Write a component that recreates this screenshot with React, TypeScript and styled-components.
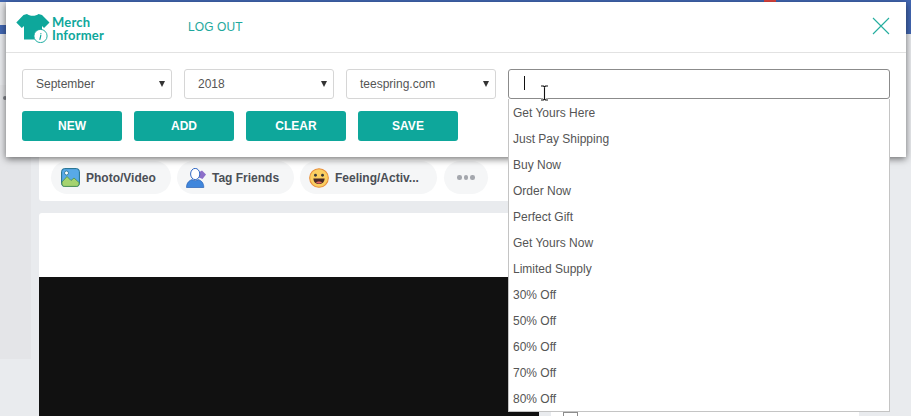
import { createGlobalStyle, styled } from 'styled-components';

const TEAL = '#0ea79b';

const SUGGESTIONS = [
  'Get Yours Here',
  'Just Pay Shipping',
  'Buy Now',
  'Order Now',
  'Perfect Gift',
  'Get Yours Now',
  'Limited Supply',
  '30% Off',
  '50% Off',
  '60% Off',
  '70% Off',
  '80% Off',
];

const SELECTS = ['September', '2018', 'teespring.com'];
const ACTIONS = ['NEW', 'ADD', 'CLEAR', 'SAVE'];

const GlobalStyle = createGlobalStyle`
  html, body {
    margin: 0;
    padding: 0;
    height: 416px;
    overflow: hidden;
    background: #e9ebee;
    font-family: 'Liberation Sans', Arial, sans-serif;
  }
  * {
    box-sizing: border-box;
  }
`;

const PhotoIcon = () => (
  <svg width="20" height="19" viewBox="-1 0 20 19">
    <rect x="0.6" y="0.6" width="17.8" height="17.8" rx="3" fill="#58a9e8" stroke="#1f6f8c" />
    <path d="M1 14 L6 8.5 L10 12.5 L13 10 L18 14.5 V16 a2.4 2.4 0 0 1 -2.4 2.4 H3.4 A2.4 2.4 0 0 1 1 16 Z" fill="#a5d36f" stroke="#4b8f4e" strokeWidth="0.8" />
    <circle cx="5.5" cy="5" r="2" fill="#fff" stroke="#1f6f8c" strokeWidth="0.8" />
  </svg>
);

const TagIcon = () => (
  <svg width="20" height="20" viewBox="0 0 20 20">
    <path d="M12.5 4.5 L16 2.5 L20 6.5 L16.5 11 L13 9.5 Z" fill="#8d6fc9" />
    <ellipse cx="9.2" cy="6" rx="4.6" ry="5.6" fill="#fff" stroke="#2f67c4" strokeWidth="1" />
    <path d="M0.5 19.5 C0.5 14.5 3.5 12.5 6 11.6 C7.6 13 10.8 13 12.4 11.6 C15 12.5 17.8 14.5 17.8 19.5 Z" fill="#3f86dc" stroke="#2a62b5" strokeWidth="0.7" />
  </svg>
);

const SmileIcon = () => (
  <svg width="20" height="20" viewBox="0 0 21 21">
    <circle cx="10.5" cy="10.5" r="9.8" fill="#fbcf61" stroke="#e88f3c" strokeWidth="1.1" />
    <circle cx="6.8" cy="7.6" r="1.5" fill="#3a3a3a" />
    <circle cx="14.2" cy="7.6" r="1.5" fill="#3a3a3a" />
    <path d="M4.6 11 H16.4 C16.2 15 13.6 16.8 10.5 16.8 C7.4 16.8 4.8 15 4.6 11 Z" fill="#4a2a26" />
    <path d="M7.4 15.2 C8.6 13.8 12.4 13.8 13.6 15.2 C12.4 16.6 8.6 16.6 7.4 15.2 Z" fill="#ea6a62" />
  </svg>
);

const ShirtLogo = () => (
  <svg width="36" height="30" viewBox="0 0 36 30">
    <path
      d="M11 1 C13.5 3.4 20 3.4 22.5 1 L26 2 L33.5 9.5 L28 15 L26 13 L26 26.5 H8 L8 13 L5.8 15 L0.3 9.5 L7.5 2 Z"
      fill={TEAL}
    />
    <circle cx="24.5" cy="23" r="6.6" fill="#fff" stroke={TEAL} strokeWidth="0.9" />
    <path d="M24.9 20.7 V20.6 M24.8 22.4 L23.9 26.4" stroke={TEAL} strokeWidth="1.2" strokeLinecap="round" fill="none" />
  </svg>
);

const CloseIcon = () => (
  <svg width="18" height="18" viewBox="0 0 18 18">
    <path d="M1 1 L17 17 M17 1 L1 17" stroke="#25ae9f" strokeWidth="1.1" fill="none" />
  </svg>
);

const IBeam = () => (
  <svg width="9" height="16" viewBox="0 0 9 16">
    <path d="M1 1 H3.5 L4.5 2 L5.5 1 H8 M4.5 2 V14 M1 15 H3.5 L4.5 14 L5.5 15 H8" stroke="#fff" strokeWidth="2.6" fill="none" />
    <path d="M1 1 H3.5 L4.5 2 L5.5 1 H8 M4.5 2 V14 M1 15 H3.5 L4.5 14 L5.5 15 H8" stroke="#111" strokeWidth="1.1" fill="none" />
  </svg>
);

const App = () => (
  <>
    <GlobalStyle />
    <Page>
      <FacebookBar>
        <BarPatch />
        <NotificationBadge />
      </FacebookBar>
      <FeedLayout>
        <LeftRail>
          <RailPanel>
            <RailDot />
          </RailPanel>
        </LeftRail>
        <FeedColumn>
          <ComposerCard>
            <ComposerChip $width={120}>
              <PhotoIcon />
              <span>Photo/Video</span>
            </ComposerChip>
            <ComposerChip $width={117}>
              <TagIcon />
              <span>Tag Friends</span>
            </ComposerChip>
            <ComposerChip $width={137}>
              <SmileIcon />
              <span>Feeling/Activ...</span>
            </ComposerChip>
            <MoreChip>
              <MoreDot />
              <MoreDot />
              <MoreDot />
            </MoreChip>
          </ComposerCard>
          <PostCard>
            <PostVideo />
          </PostCard>
        </FeedColumn>
        <SideColumn>
          <SideCard>
            <SideCheckbox />
          </SideCard>
        </SideColumn>
      </FeedLayout>

      <Modal>
        <ModalHeader>
          <Logo>
            <ShirtLogo />
            <LogoText>
              Merch
              <br />
              Informer
            </LogoText>
          </Logo>
          <LogOut>LOG OUT</LogOut>
          <CloseButton>
            <CloseIcon />
          </CloseButton>
        </ModalHeader>
        <ModalBody>
          <FieldRow>
            {SELECTS.map((label) => (
              <SelectBox key={label}>
                <span>{label}</span>
                <Caret />
              </SelectBox>
            ))}
            <SearchField>
              <TextCaret />
              <CursorSlot>
                <IBeam />
              </CursorSlot>
              <SuggestionList>
                {SUGGESTIONS.map((item) => (
                  <Suggestion key={item}>{item}</Suggestion>
                ))}
              </SuggestionList>
            </SearchField>
          </FieldRow>
          <ActionRow>
            {ACTIONS.map((label) => (
              <ActionButton key={label}>{label}</ActionButton>
            ))}
          </ActionRow>
        </ModalBody>
      </Modal>
    </Page>
  </>
);

const Page = styled.div`
  position: relative;
  width: 911px;
  height: 416px;
  overflow: hidden;
  background: #e9ebee;
`;

const FacebookBar = styled.div`
  position: relative;
  height: 34px;
  background: #4267b2;
`;

const BarPatch = styled.div`
  position: absolute;
  left: 0;
  top: 2px;
  width: 6px;
  height: 23px;
  background: #e4e5e8;
`;

const NotificationBadge = styled.div`
  position: absolute;
  left: 764px;
  top: 0;
  width: 12px;
  height: 3px;
  background: #e0453f;
`;

const FeedLayout = styled.div`
  display: grid;
  grid-template-columns: 31px 500px 312px;
  column-gap: 8px;
  height: 382px;
`;

const LeftRail = styled.div`
  padding-top: 51px;
`;

const RailPanel = styled.div`
  height: 274px;
  padding: 11px 0 0 3px;
  background: #e4e5e8;
`;

const RailDot = styled.div`
  width: 4px;
  height: 4px;
  border-radius: 50%;
  background: #7f8289;
`;

const FeedColumn = styled.div`
  display: flex;
  flex-direction: column;
  gap: 12px;
  padding-top: 80px;
`;

const ComposerCard = styled.div`
  display: flex;
  align-items: flex-start;
  gap: 6px;
  height: 87px;
  padding: 47px 12px 0;
  background: #fff;
  border-radius: 3px;
`;

const ComposerChip = styled.div<{ $width: number }>`
  display: flex;
  align-items: center;
  gap: 6px;
  width: ${({ $width }) => $width}px;
  height: 33px;
  padding-left: 9px;
  border-radius: 17px;
  background: #f5f6f7;
  color: #4b4f56;
  font-size: 12px;
  font-weight: 700;
  white-space: nowrap;
`;

const MoreChip = styled.div`
  display: flex;
  align-items: center;
  justify-content: center;
  gap: 2px;
  width: 44px;
  height: 33px;
  margin-left: 1px;
  border-radius: 17px;
  background: #f5f6f7;
`;

const MoreDot = styled.span`
  width: 4.5px;
  height: 4.5px;
  border-radius: 50%;
  background: #a4a7ad;
`;

const PostCard = styled.div`
  flex: 1;
  display: flex;
  padding-top: 64px;
  background: #fff;
  border-radius: 3px 3px 0 0;
`;

const PostVideo = styled.div`
  flex: 1;
  background: #111;
`;

const SideColumn = styled.div`
  padding: 300px 0 0 4px;
`;

const SideCard = styled.div`
  height: 82px;
  padding: 78px 0 0 12px;
  background: #fff;
`;

const SideCheckbox = styled.div`
  width: 15px;
  height: 4px;
  background: #fff;
  border: 1px solid #8d8d8d;
  border-bottom: none;
`;

const Modal = styled.div`
  position: absolute;
  left: 6px;
  top: 2px;
  width: 900px;
  height: 155px;
  background: #fff;
  box-shadow: 0 2px 7px rgba(0, 0, 0, 0.55);
`;

const ModalHeader = styled.header`
  display: flex;
  align-items: center;
  height: 51px;
  padding: 0 16px 0 10px;
  border-bottom: 1px solid #e2e2e2;
`;

const Logo = styled.div`
  display: flex;
  align-items: flex-start;
  width: 172px;
  height: 34px;
  padding-top: 3px;
`;

const LogoText = styled.div`
  padding-top: 3px;
  color: ${TEAL};
  font-family: Lato, sans-serif;
  font-size: 13px;
  font-weight: 700;
  line-height: 13px;
  letter-spacing: 0.2px;
`;

const LogOut = styled.a`
  flex: 1;
  color: #1ea89d;
  font-size: 12px;
  letter-spacing: 0.1px;
`;

const CloseButton = styled.div`
  display: flex;
  padding-bottom: 2px;
`;

const ModalBody = styled.div`
  display: flex;
  flex-direction: column;
  gap: 12px;
  padding: 16px 16px 0;
`;

const FieldRow = styled.div`
  display: flex;
  gap: 12px;
`;

const SelectBox = styled.div`
  display: flex;
  align-items: center;
  justify-content: space-between;
  width: 150px;
  height: 30px;
  padding: 0 6px 0 13px;
  border: 1px solid #d6d6d6;
  border-radius: 3px;
  background: #fff;
  color: #555;
  font-size: 12px;
`;

const Caret = styled.span`
  width: 0;
  height: 0;
  border-left: 3.5px solid transparent;
  border-right: 3.5px solid transparent;
  border-top: 6px solid #333;
`;

const SearchField = styled.div`
  position: relative;
  display: flex;
  align-items: center;
  width: 382px;
  height: 30px;
  padding-left: 15px;
  border: 1px solid #8b8b8b;
  border-radius: 3px;
  background: #fff;
`;

const TextCaret = styled.span`
  width: 1px;
  height: 14px;
  margin-bottom: 2px;
  background: #111;
`;

const CursorSlot = styled.span`
  position: absolute;
  left: 31px;
  top: 15px;
  z-index: 2;
  display: flex;
`;

const SuggestionList = styled.ul`
  position: absolute;
  left: -1px;
  top: 29px;
  width: 382px;
  margin: 0;
  padding: 0;
  list-style: none;
  background: #fff;
  border: 1px solid #c4c4c4;
  border-top: none;
`;

const Suggestion = styled.li`
  height: 26px;
  padding: 1px 0 0 4px;
  color: #555;
  font-size: 12px;
  line-height: 26px;
`;

const ActionRow = styled.div`
  display: flex;
  gap: 12px;
`;

const ActionButton = styled.button`
  width: 100px;
  height: 30px;
  padding: 0;
  border: none;
  border-radius: 3px;
  background: ${TEAL};
  color: #fff;
  font-family: inherit;
  font-size: 12px;
  font-weight: 700;
`;

export default App;
